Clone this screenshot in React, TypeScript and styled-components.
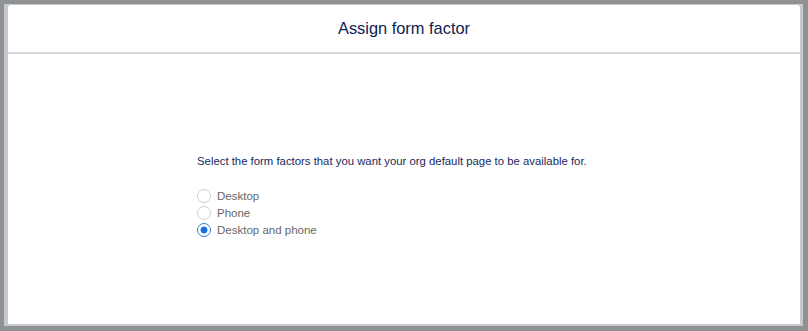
import { useState } from 'react';
import styled, { createGlobalStyle } from 'styled-components';

const GlobalStyle = createGlobalStyle`
  html, body {
    margin: 0;
    padding: 0;
    background: #909192;
    font-family: "Liberation Sans", Arial, sans-serif;
  }
`;

const options = ['Desktop', 'Phone', 'Desktop and phone'];

const App = () => {
  const [selected, setSelected] = useState<string>('Desktop and phone');

  return (
    <>
      <GlobalStyle />
      <Backdrop>
        <Frame>
          <Modal>
            <Header>
              <Title>Assign form factor</Title>
            </Header>
            <Body>
              <Prompt>Select the form factors that you want your org default page to be available for.</Prompt>
              <OptionList>
                {options.map((opt) => (
                  <OptionRow key={opt} onClick={() => setSelected(opt)}>
                    <Radio $checked={selected === opt} />
                    <OptionLabel>{opt}</OptionLabel>
                  </OptionRow>
                ))}
              </OptionList>
            </Body>
          </Modal>
        </Frame>
      </Backdrop>
    </>
  );
};

const Backdrop = styled.div`
  width: 808px;
  height: 331px;
  background: #909192;
  padding: 4px 5px 0 4px;
  box-sizing: border-box;
`;

const Frame = styled.div`
  background: #c5cad1;
  padding: 1px 3px 2px 4px;
  height: 322px;
  box-sizing: border-box;
`;

const Modal = styled.div`
  background: #ffffff;
  height: 100%;
  display: flex;
  flex-direction: column;
  border-radius: 3px 3px 0 0;
`;

const Header = styled.div`
  height: 47px;
  border-bottom: 2px solid #d8d8d8;
  display: flex;
  align-items: center;
  justify-content: center;
`;

const Title = styled.h2`
  margin: 0;
  font-size: 16.4px;
  font-weight: 400;
  color: #0e2250;
`;

const Body = styled.div`
  flex: 1;
  padding: 99px 0 0 189px;
`;

const Prompt = styled.p`
  margin: 0;
  font-size: 11.35px;
  line-height: 16px;
  color: #17295c;
`;

const OptionList = styled.div`
  margin-top: 18px;
  display: flex;
  flex-direction: column;
`;

const OptionRow = styled.label`
  display: flex;
  align-items: center;
  height: 17px;
  cursor: pointer;
`;

const Radio = styled.span<{ $checked: boolean }>`
  width: 14px;
  height: 14px;
  box-sizing: border-box;
  border-radius: 50%;
  border: 1px solid ${(p) => (p.$checked ? '#2a7de1' : '#cfcfcf')};
  background: ${(p) =>
    p.$checked ? 'radial-gradient(circle, #1a6fdc 0 3.2px, #ffffff 3.8px)' : '#ffffff'};
  margin-right: 6px;
  flex-shrink: 0;
`;

const OptionLabel = styled.span`
  font-size: 11.5px;
  color: #676767;
`;

export default App;
